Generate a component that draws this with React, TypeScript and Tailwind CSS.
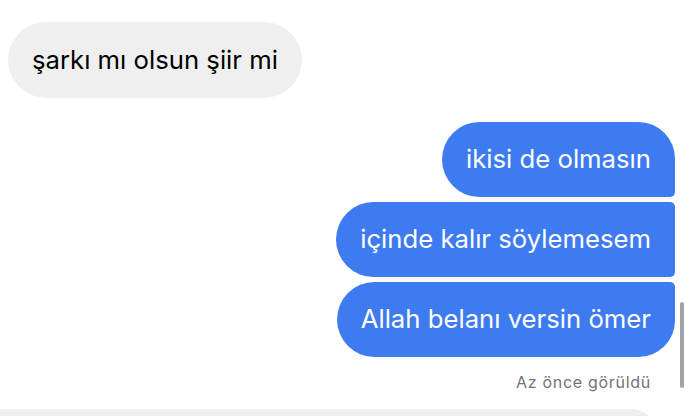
const messages = [
  { text: "ikisi de olmasın", shape: "rounded-l-[38px] rounded-tr-[37px] rounded-br-[5px]" },
  { text: "içinde kalır söylemesem", shape: "rounded-l-[38px] rounded-r-[5px]" },
  { text: "Allah belanı versin ömer", shape: "rounded-l-[38px] rounded-tr-[5px] rounded-br-[37px]" },
];

export default function App() {
  return (
    <div className="relative h-[416px] w-[690px] overflow-hidden bg-white font-['Inter','Noto_Sans',sans-serif]">
      <div className="flex flex-col pl-2 pr-[15px] pt-[22px]">
        <div className="flex">
          <div className="flex h-[76px] items-center rounded-full bg-[#efefef] px-6 text-[25.7px] text-black">
            şarkı mı olsun şiir mi
          </div>
        </div>

        <div className="mt-6 flex flex-col items-end gap-[5px]">
          {messages.map((m) => (
            <div
              key={m.text}
              className={`flex h-[75px] items-center bg-[#3e7bf1] px-6 text-[25.7px] text-white ${m.shape}`}
            >
              {m.text}
            </div>
          ))}
        </div>

        <p className="mt-[13px] pr-6 text-right text-[16px] tracking-[0.7px] text-[#737373]">Az önce görüldü</p>

        <div className="mt-[15px] -ml-2 h-[60px] w-[660px] rounded-tr-[30px] bg-[#efefef]" />
      </div>

      <div className="absolute left-[680px] top-[302px] h-[86px] w-[4px] rounded-full bg-[#a3a3a3]" />
    </div>
  );
}
